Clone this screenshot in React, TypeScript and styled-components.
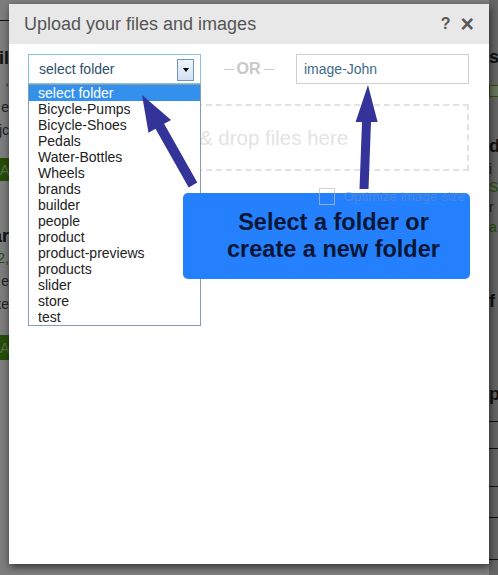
import React from "react";
import styled, { createGlobalStyle } from "styled-components";

const Global = createGlobalStyle`
  html, body { margin: 0; padding: 0; }
  body { font-family: "Liberation Sans", Arial, sans-serif; background: #fff; }
`;

const Screen = styled.div`
  position: relative;
  width: 498px;
  height: 575px;
  overflow: hidden;
`;

const Backdrop = styled.div`
  display: grid;
  grid-template-columns: 9px 1fr 9px;
  height: 100%;
`;

const Strip = styled.div<{ $side: "left" | "right" }>`
  display: flex;
  flex-direction: column;
  overflow: hidden;
  background: ${(p) => (p.$side === "left" ? "#fafafa" : "#cacaca")};
  align-items: ${(p) => (p.$side === "left" ? "flex-end" : "flex-start")};
`;

const PageRule = styled.div<{ $top: number }>`
  flex-shrink: 0;
  margin-top: ${(p) => p.$top}px;
  width: 100%;
  height: 1px;
  background: #222;
`;

const PageHeading = styled.div<{ $top: number }>`
  flex-shrink: 0;
  margin-top: ${(p) => p.$top}px;
  font: bold 18px/18px "Liberation Sans", Arial, sans-serif;
  color: #222;
  white-space: nowrap;
`;

const PageText = styled.div<{ $top: number; $green?: boolean }>`
  flex-shrink: 0;
  margin-top: ${(p) => p.$top}px;
  font: 14px/16px "Liberation Sans", Arial, sans-serif;
  color: ${(p) => (p.$green ? "#4f9a12" : "#444")};
  white-space: nowrap;
`;

const PageButton = styled.div<{ $top: number; $h: number }>`
  flex-shrink: 0;
  margin-top: ${(p) => p.$top}px;
  height: ${(p) => p.$h}px;
  width: 9px;
  display: flex;
  align-items: center;
  overflow: hidden;
  background: #4c9a10;
  color: #b6e08e;
  font: 14px "Liberation Sans", Arial, sans-serif;
  white-space: nowrap;
`;

const PageBadge = styled.div<{ $top: number }>`
  flex-shrink: 0;
  margin-top: ${(p) => p.$top}px;
  width: 14px;
  height: 10px;
  border: 1px solid #5aa21c;
  background: #cfe8b8;
`;

const Overlay = styled.div`
  position: absolute;
  inset: 0;
  background: rgba(0, 0, 0, 0.5);
`;

const Modal = styled.div`
  position: absolute;
  left: 9px;
  top: 4px;
  width: 480px;
  height: 560px;
  background: #fff;
  box-shadow: 1px 3px 8px rgba(0, 0, 0, 0.6);
  display: flex;
  flex-direction: column;
`;

const Header = styled.div`
  height: 40px;
  flex-shrink: 0;
  background: #e8e8e8;
  display: flex;
  align-items: center;
  padding: 0 15px 0 15px;
`;

const Title = styled.h3`
  margin: 0;
  flex: 1;
  font: 18px "Liberation Sans", Arial, sans-serif;
  color: #555;
`;

const HeaderIcons = styled.div`
  display: flex;
  align-items: center;
  gap: 10px;
  color: #585858;
  font-family: "Liberation Sans", Arial, sans-serif;
  font-weight: bold;
`;

const HelpIcon = styled.span`
  font-size: 16px;
`;

const CloseIcon = styled.span`
  font-size: 23px;
  line-height: 1;
`;

const Body = styled.div`
  position: relative;
  flex: 1;
  padding: 10px 20px 0 19px;
  display: flex;
  flex-direction: column;
`;

const FolderRow = styled.div`
  display: grid;
  grid-template-columns: 173px 1fr 173px;
  align-items: center;
  height: 30px;
`;

const SelectWrap = styled.div`
  position: relative;
  height: 30px;
`;

const SelectBox = styled.div`
  box-sizing: border-box;
  height: 30px;
  border: 1px solid #86c4d4;
  display: flex;
  align-items: center;
  padding: 0 6px 0 10px;
  font: 14px "Liberation Sans", Arial, sans-serif;
  color: #2f4f6b;
`;

const SelectValue = styled.span`
  flex: 1;
`;

const SelectArrow = styled.span`
  box-sizing: border-box;
  width: 17px;
  height: 22px;
  border: 1px solid #7394bd;
  background: linear-gradient(#eef4fb, #d3e2f3);
  display: flex;
  align-items: center;
  justify-content: center;
  margin-top: 2px;
`;

const Triangle = styled.span`
  width: 0;
  height: 0;
  border-left: 3.5px solid transparent;
  border-right: 3.5px solid transparent;
  border-top: 4px solid #000;
`;

const Dropdown = styled.ul`
  position: absolute;
  top: 100%;
  left: 0;
  width: 173px;
  box-sizing: border-box;
  margin: 0;
  padding: 0;
  list-style: none;
  border: 1px solid #8a9db0;
  background: #fff;
  z-index: 2;
`;

const Option = styled.li<{ $active?: boolean }>`
  height: 16px;
  padding-left: 9px;
  font: 14px/16px "Liberation Sans", Arial, sans-serif;
  color: ${(p) => (p.$active ? "#fff" : "#222")};
  background: ${(p) => (p.$active ? "#3390ec" : "transparent")};
  white-space: nowrap;
`;

const OrLabel = styled.div`
  display: flex;
  align-items: center;
  justify-content: center;
  gap: 3px;
  font: bold 16px "Liberation Sans", Arial, sans-serif;
  color: #c8c8c8;
`;

const OrDash = styled.span`
  width: 10px;
  height: 1px;
  background: #c8c8c8;
`;

const NameInput = styled.input`
  box-sizing: border-box;
  height: 30px;
  width: 173px;
  border: 1px solid #cfcfcf;
  padding: 0 7px;
  font: 14px "Liberation Sans", Arial, sans-serif;
  color: #3f6b8c;
  outline: none;
`;

const DropZone = styled.div`
  box-sizing: border-box;
  margin-top: 20px;
  height: 67px;
  border: 2px dashed #e2e2e2;
  display: flex;
  align-items: center;
  justify-content: center;
  font: 20.5px "Liberation Sans", Arial, sans-serif;
  color: #e3e3e3;
`;

const OptimizeRow = styled.label`
  position: relative;
  z-index: 4;
  margin-top: 17px;
  display: flex;
  align-items: center;
  justify-content: flex-end;
  gap: 8px;
  padding-right: 4px;
  font: 13.5px "Liberation Sans", Arial, sans-serif;
  color: rgba(110, 145, 200, 0.55);
`;

const CheckBox = styled.span`
  box-sizing: border-box;
  width: 16px;
  height: 17px;
  border: 1px solid rgba(190, 190, 190, 0.7);
`;

const Callout = styled.div`
  position: absolute;
  left: 174px;
  top: 189px;
  width: 287px;
  height: 86px;
  box-sizing: border-box;
  padding-left: 14px;
  border-radius: 5px;
  background: #2480fc;
  display: flex;
  align-items: center;
  justify-content: center;
  text-align: center;
  font: bold 23.5px/27px "Liberation Sans", Arial, sans-serif;
  color: #0a1636;
  z-index: 3;
`;

const Arrows = styled.svg`
  position: absolute;
  left: 0;
  top: 0;
  pointer-events: none;
  z-index: 5;
`;

const folders = [
  "select folder",
  "Bicycle-Pumps",
  "Bicycle-Shoes",
  "Pedals",
  "Water-Bottles",
  "Wheels",
  "brands",
  "builder",
  "people",
  "product",
  "product-previews",
  "products",
  "slider",
  "store",
  "test",
];

export default function App() {
  return (
    <Screen>
      <Global />
      <Backdrop>
        <Strip $side="left">
          <PageRule $top={20} />
          <PageHeading $top={28}>il</PageHeading>
          <PageText $top={5} $green>,</PageText>
          <PageText $top={11}>e</PageText>
          <PageText $top={7}>jc</PageText>
          <PageButton $top={20} $h={23}>Ac</PageButton>
          <PageHeading $top={46}>ar</PageHeading>
          <PageText $top={5} $green>2,</PageText>
          <PageText $top={7}>e</PageText>
          <PageText $top={7}>ke</PageText>
          <PageButton $top={23} $h={25}>Ac</PageButton>
        </Strip>
        <div />
        <Strip $side="right">
          <PageHeading $top={48}>s</PageHeading>
          <PageBadge $top={19} />
          <PageHeading $top={40}>d</PageHeading>
          <PageText $top={6}>i</PageText>
          <PageText $top={2} $green>S</PageText>
          <PageText $top={4}>r</PageText>
          <PageText $top={4} $green>a</PageText>
          <PageHeading $top={57}>f</PageHeading>
          <PageHeading $top={75}>p</PageHeading>
          <PageRule $top={18} />
          <PageRule $top={26} />
          <PageRule $top={37} />
          <PageRule $top={30} />
          <PageRule $top={41} />
        </Strip>
      </Backdrop>
      <Overlay />
      <Modal>
        <Header>
          <Title>Upload your files and images</Title>
          <HeaderIcons>
            <HelpIcon>?</HelpIcon>
            <CloseIcon>×</CloseIcon>
          </HeaderIcons>
        </Header>
        <Body>
          <FolderRow>
            <SelectWrap>
              <SelectBox>
                <SelectValue>select folder</SelectValue>
                <SelectArrow>
                  <Triangle />
                </SelectArrow>
              </SelectBox>
              <Dropdown>
                {folders.map((f, i) => (
                  <Option key={f} $active={i === 0}>
                    {f}
                  </Option>
                ))}
              </Dropdown>
            </SelectWrap>
            <OrLabel>
              <OrDash />
              OR
              <OrDash />
            </OrLabel>
            <NameInput defaultValue="image-John" readOnly />
          </FolderRow>
          <DropZone>Drag &amp; drop files here</DropZone>
          <OptimizeRow>
            <CheckBox />
            Optimize image size
          </OptimizeRow>
        </Body>
        <Callout>
          Select a folder or
          <br />
          create a new folder
        </Callout>
        <Arrows width="480" height="560" viewBox="9 4 480 560">
          <polygon
            fill="#33339a"
            points="142,95 171.1,119.9 164.1,123.8 197.3,182.5 188.7,187.5 155.5,128.8 148.5,132.7"
          />
          <polygon
            fill="#33339a"
            points="368,85 377.6,122 371,122 368.5,189 359.5,189 362,122 355.6,122"
          />
        </Arrows>
      </Modal>
    </Screen>
  );
}
